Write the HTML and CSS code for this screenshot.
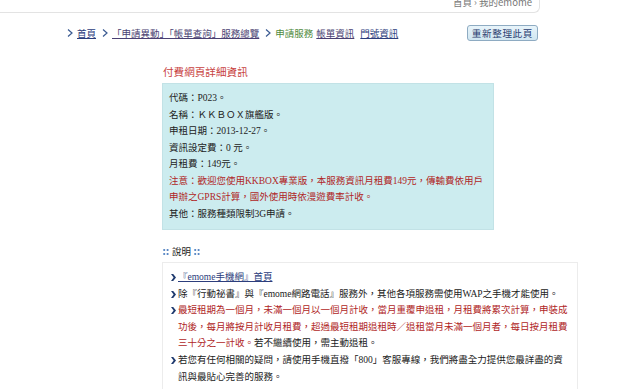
FILE: index.html
```html
<!DOCTYPE html>
<html lang="zh-Hant">
<head>
    <meta charset="UTF-8">
    <title>付費網頁詳細資訊</title>
    <link rel="stylesheet" href="styles.css">
</head>
<body>
<div class="page">
    <div class="topbar">
        <div class="topbar-path">首頁 › 我的emome</div>
    </div>

    <div class="crumbs">
        <div class="crumb-path">
            <svg class="crumb-arrow" viewBox="0 0 6 8"><polyline points="1,0.5 5,4 1,7.5"/></svg>
            <a href="#" class="crumb-link">首頁</a>
            <svg class="crumb-arrow" viewBox="0 0 6 8"><polyline points="1,0.5 5,4 1,7.5"/></svg>
            <a href="#" class="crumb-link visited">「申請異動」「帳單查詢」服務總覽</a>
            <svg class="crumb-arrow" viewBox="0 0 6 8"><polyline points="1,0.5 5,4 1,7.5"/></svg>
            <span class="crumb-current">申請服務</span>
            <a href="#" class="crumb-link visited">帳單資訊</a>
            <a href="#" class="crumb-link">門號資訊</a>
        </div>
        <button class="refresh-btn">重新整理此頁</button>
    </div>

    <div class="content">
        <h2 class="detail-title">付費網頁詳細資訊</h2>
        <div class="detail-box">
            <p>代碼：P023。</p>
            <p>名稱：ＫＫＢＯＸ旗艦版。</p>
            <p>申租日期：2013-12-27。</p>
            <p>資訊設定費：0 元。</p>
            <p>月租費：149元。</p>
            <p class="warn">注意：歡迎您使用KKBOX專業版，本服務資訊月租費149元，傳輸費依用戶申辦之GPRS計算，國外使用時依漫遊費率計收。</p>
            <p>其他：服務種類限制3G申請。</p>
        </div>

        <h3 class="note-title">
            <svg class="dots" viewBox="0 0 6 8"><circle cx="1.2" cy="2" r="1.1"/><circle cx="4.6" cy="2" r="1.1"/><circle cx="1.2" cy="6" r="1.1"/><circle cx="4.6" cy="6" r="1.1"/></svg>
            說明
            <svg class="dots" viewBox="0 0 6 8"><circle cx="1.2" cy="2" r="1.1"/><circle cx="4.6" cy="2" r="1.1"/><circle cx="1.2" cy="6" r="1.1"/><circle cx="4.6" cy="6" r="1.1"/></svg>
        </h3>
        <ul class="note-list">
            <li>
                <svg class="bullet" viewBox="0 0 5 7"><path d="M0 0H2.2L5 3.5L2.2 7H0L2.6 3.5Z"/></svg>
                <span><a href="#" class="note-link">『emome手機網』首頁</a></span>
            </li>
            <li>
                <svg class="bullet" viewBox="0 0 5 7"><path d="M0 0H2.2L5 3.5L2.2 7H0L2.6 3.5Z"/></svg>
                <span>除『行動祕書』與『emome網路電話』服務外，其他各項服務需使用WAP之手機才能使用。</span>
            </li>
            <li>
                <svg class="bullet" viewBox="0 0 5 7"><path d="M0 0H2.2L5 3.5L2.2 7H0L2.6 3.5Z"/></svg>
                <span><span class="warn">最短租期為一個月，未滿一個月以一個月計收，當月重覆申退租，月租費將累次計算，申裝成功後，每月將按月計收月租費，超過最短租期退租時／退租當月未滿一個月者，每日按月租費三十分之一計收。</span>若不繼續使用，需主動退租。</span>
            </li>
            <li>
                <svg class="bullet" viewBox="0 0 5 7"><path d="M0 0H2.2L5 3.5L2.2 7H0L2.6 3.5Z"/></svg>
                <span>若您有任何相關的疑問，請使用手機直撥「800」客服專線，我們將盡全力提供您最詳盡的資訊與最貼心完善的服務。</span>
            </li>
        </ul>
    </div>
</div>
</body>
</html>
```

FILE: styles.css
```css
/* base */
body {
    margin: 0;
    background: #ffffff;
    color: #222222;
    font-family: "Liberation Serif", "Noto Sans CJK TC", serif;
    font-size: 9.5px;
}

.page {
    width: 540px;
}

/* top path bar */
.topbar {
    height: 12px;
    border: 1px solid #e3e3e3;
    border-top: none;
    border-left: none;
    border-radius: 0 0 6px 0;
    overflow: hidden;
}

.topbar-path {
    margin-top: -4px;
    padding-right: 7px;
    text-align: right;
    line-height: 12px;
    color: #777777;
    font-family: "Noto Sans CJK TC", sans-serif;
}

/* breadcrumb row */
.crumbs {
    display: flex;
    justify-content: space-between;
    align-items: center;
    height: 16px;
    margin-top: 12px;
    padding-left: 67px;
    padding-right: 2px;
    font-family: "Noto Sans CJK TC", sans-serif;
}

.crumb-path {
    display: flex;
    align-items: center;
    line-height: 14px;
}

.crumb-arrow {
    width: 6px;
    height: 8px;
    margin-right: 4px;
    fill: none;
    stroke: #3a5a92;
    stroke-width: 1.2;
}

.crumb-link {
    margin-right: 6px;
    color: #2c3d7c;
    text-decoration: underline;
}

.crumb-link.visited {
    color: #4a3f72;
}

.crumb-current {
    margin-right: 3px;
    color: #4f8a3c;
}

.refresh-btn {
    height: 16px;
    padding: 0 4px;
    border: 1px solid #8eabc2;
    border-radius: 3px;
    background: linear-gradient(#e8f4fa, #d0e6f1);
    color: #2b3e70;
    font-family: "Noto Sans CJK TC", sans-serif;
    font-size: 9.6px;
    letter-spacing: 0.6px;
    line-height: 14px;
}

/* content */
.content {
    margin-left: 162px;
}

.detail-title {
    margin: 24px 0 4px 1px;
    color: #c8423f;
    font-family: "Noto Sans CJK TC", sans-serif;
    font-size: 10.6px;
    font-weight: normal;
    line-height: 14px;
}

.detail-box {
    width: 318px;
    padding: 6px 6px 7px 6px;
    background: #ccecef;
    border: 1px solid #c2e2e6;
    line-height: 16.5px;
}

.detail-box p {
    margin: 0;
}

.warn {
    color: #b02626;
}

/* notes */
.note-title {
    display: flex;
    align-items: center;
    gap: 3px;
    margin: 14px 0 2px 1px;
    font-size: 9.5px;
    font-weight: normal;
    line-height: 16px;
}

.dots {
    width: 6px;
    height: 8px;
    fill: #4d7fc0;
}

.note-list {
    width: 398px;
    margin: 0;
    padding: 6px 8px 6px 8px;
    list-style: none;
    border: 1px solid #ececec;
    line-height: 16.6px;
}

.note-list li {
    display: flex;
    align-items: flex-start;
    gap: 2px;
}

.note-list li > span {
    width: 392px;
}

.bullet {
    flex: none;
    width: 5px;
    height: 7px;
    margin-top: 5px;
    fill: #1f3a6e;
}

.note-link {
    color: #2c3d7c;
    text-decoration: underline;
}
```
